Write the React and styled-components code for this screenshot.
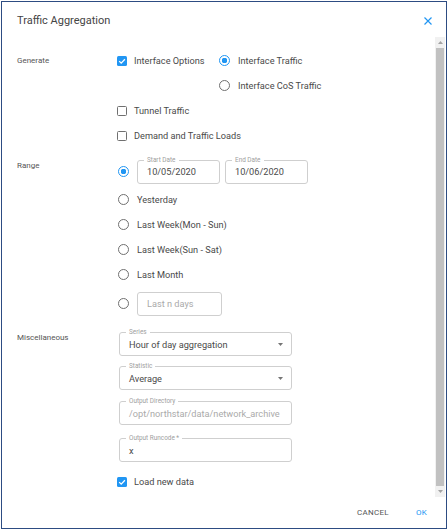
import styled, { createGlobalStyle } from 'styled-components';

const GlobalStyle = createGlobalStyle`
  html, body {
    margin: 0;
    padding: 0;
    background: #ffffff;
  }
  body {
    font-family: Roboto, "Liberation Sans", Arial, sans-serif;
    color: #4a4a4a;
  }
`;

const BLUE = '#2196f3';

function CheckIcon() {
  return (
    <svg width="10" height="10" viewBox="0 0 10 10">
      <path d="M2.2 5.1 L4.2 7.1 L7.9 3.2" fill="none" stroke="#fff" strokeWidth="1.3" />
    </svg>
  );
}

function CloseIcon() {
  return (
    <svg width="10" height="10" viewBox="0 0 10 10">
      <path d="M1.5 1.5 L8.5 8.5 M8.5 1.5 L1.5 8.5" stroke={BLUE} strokeWidth="1.2" />
    </svg>
  );
}

function Caret({ up, color = '#757575' }) {
  return (
    <svg width="5" height="3" viewBox="0 0 5 3">
      <path d={up ? 'M0 3 L5 3 L2.5 0 Z' : 'M0 0 L5 0 L2.5 3 Z'} fill={color} />
    </svg>
  );
}

function Checkbox({ checked, label }) {
  return (
    <Option>
      <Box $checked={checked}>{checked && <CheckIcon />}</Box>
      <OptionText>{label}</OptionText>
    </Option>
  );
}

function Radio({ checked, label, children }) {
  return (
    <Option $gap={8}>
      <Ring $checked={checked} />
      {label && <OptionText>{label}</OptionText>}
      {children}
    </Option>
  );
}

function Field({ label, value, placeholder, width, select, disabled }) {
  return (
    <FieldBox $width={width}>
      {label && <FieldLabel>{label}</FieldLabel>}
      <FieldValue $muted={disabled || !value}>{value || placeholder}</FieldValue>
      {select && <Caret />}
    </FieldBox>
  );
}

export default function App() {
  return (
    <Page>
      <GlobalStyle />
      <Dialog>
        <Header>
          <Title>Traffic Aggregation</Title>
          <CloseButton>
            <CloseIcon />
          </CloseButton>
        </Header>

        <Main>
          <Body>
            <Section>
              <SectionLabel $top={7}>Generate</SectionLabel>
              <Controls>
                <Row>
                  <FirstOption>
                    <Checkbox checked label="Interface Options" />
                  </FirstOption>
                  <Controls>
                    <Radio checked label="Interface Traffic" />
                    <Radio label="Interface CoS Traffic" />
                  </Controls>
                </Row>
                <Checkbox label="Tunnel Traffic" />
                <Checkbox label="Demand and Traffic Loads" />
              </Controls>
            </Section>

            <Section $mt={11}>
              <SectionLabel $top={1}>Range</SectionLabel>
              <RangeList>
                <Radio checked>
                  <Row $gap={5}>
                    <Field label="Start Date" value="10/05/2020" width={83} />
                    <Field label="End Date" value="10/06/2020" width={83} />
                  </Row>
                </Radio>
                <Spacer $h={3} />
                <Radio label="Yesterday" />
                <Radio label="Last Week(Mon - Sun)" />
                <Radio label="Last Week(Sun - Sat)" />
                <Radio label="Last Month" />
                <Spacer $h={4} />
                <Radio>
                  <Field placeholder="Last n days" width={85} />
                </Radio>
              </RangeList>
            </Section>

            <Section $mt={16}>
              <SectionLabel $top={0}>Miscellaneous</SectionLabel>
              <FieldStack>
                <Field label="Series" value="Hour of day aggregation" width={173} select />
                <Spacer $h={10} />
                <Field label="Statistic" value="Average" width={173} select />
                <Spacer $h={11} />
                <Field label="Output Directory" value="/opt/northstar/data/network_archive" width={173} disabled />
                <Spacer $h={13} />
                <Field label="Output Runcode *" value="x" width={173} />
                <Spacer $h={7} />
                <LoadRow>
                  <Checkbox checked label="Load new data" />
                </LoadRow>
              </FieldStack>
            </Section>
          </Body>

          <ScrollBar>
            <ScrollArrow>
              <Caret up color="#a3a3a3" />
            </ScrollArrow>
            <Thumb />
            <ScrollArrow>
              <Caret color="#a3a3a3" />
            </ScrollArrow>
          </ScrollBar>
        </Main>

        <Footer>
          <TextButton>CANCEL</TextButton>
          <TextButton $primary>OK</TextButton>
        </Footer>
      </Dialog>
    </Page>
  );
}

const Page = styled.div`
  width: 448px;
  height: 530px;
  padding: 1px;
  box-sizing: border-box;
`;

const Dialog = styled.div`
  width: 100%;
  height: 100%;
  box-sizing: border-box;
  border: 1px solid #2d4c82;
  background: #ffffff;
  display: flex;
  flex-direction: column;
`;

const Header = styled.div`
  height: 35px;
  flex-shrink: 0;
  display: flex;
  align-items: center;
  justify-content: space-between;
  padding: 2px 13px 0 15px;
  box-sizing: border-box;
`;

const Title = styled.div`
  font-size: 11px;
  color: #444444;
`;

const CloseButton = styled.div`
  display: flex;
  align-items: center;
  cursor: pointer;
`;

const Main = styled.div`
  height: 460px;
  flex-shrink: 0;
  display: flex;
`;

const Body = styled.div`
  flex: 1;
  display: flex;
  flex-direction: column;
  padding: 11px 0 0 15px;
  overflow: hidden;
`;

const Section = styled.div`
  display: grid;
  grid-template-columns: 100px 1fr;
  align-items: start;
  margin-top: ${(props) => props.$mt || 0}px;
`;

const SectionLabel = styled.div`
  font-size: 8px;
  line-height: 12px;
  color: #555555;
  padding-top: ${(props) => props.$top}px;
`;

const Controls = styled.div`
  display: flex;
  flex-direction: column;
`;

const Row = styled.div`
  display: flex;
  align-items: flex-start;
  gap: ${(props) => props.$gap || 0}px;
`;

const FirstOption = styled.div`
  width: 102px;
  flex-shrink: 0;
`;

const RangeList = styled.div`
  display: flex;
  flex-direction: column;
  padding-left: 1px;
`;

const FieldStack = styled.div`
  display: flex;
  flex-direction: column;
  padding-left: 2px;
`;

const LoadRow = styled.div`
  margin-left: -2px;
`;

const Spacer = styled.div`
  height: ${(props) => props.$h}px;
`;

const Option = styled.div`
  display: flex;
  align-items: center;
  min-height: 25px;
  gap: ${(props) => props.$gap || 7}px;
`;

const OptionText = styled.span`
  font-size: 9.2px;
  color: #4a4a4a;
  white-space: nowrap;
`;

const Box = styled.div`
  width: 10px;
  height: 10px;
  box-sizing: border-box;
  border-radius: 1.5px;
  display: flex;
  align-items: center;
  justify-content: center;
  background: ${(props) => (props.$checked ? BLUE : '#ffffff')};
  border: ${(props) => (props.$checked ? 'none' : '1.2px solid #707070')};
`;

const Ring = styled.div`
  width: 11px;
  height: 11px;
  flex-shrink: 0;
  box-sizing: border-box;
  border-radius: 50%;
  border: 1.2px solid ${(props) => (props.$checked ? BLUE : '#707070')};
  background: ${(props) =>
    props.$checked ? `radial-gradient(circle, ${BLUE} 0 2.6px, #ffffff 3px)` : '#ffffff'};
`;

const FieldBox = styled.div`
  position: relative;
  width: ${(props) => props.$width}px;
  height: 24px;
  box-sizing: border-box;
  border: 1px solid #cfcfcf;
  border-radius: 3px;
  display: flex;
  align-items: center;
  justify-content: space-between;
  padding: 0 8px 0 9px;
`;

const FieldLabel = styled.span`
  position: absolute;
  top: -5px;
  left: 6px;
  padding: 0 3px;
  background: #ffffff;
  font-size: 6.4px;
  line-height: 8px;
  color: #a0a0a0;
  white-space: nowrap;
`;

const FieldValue = styled.span`
  font-size: 9.2px;
  color: ${(props) => (props.$muted ? '#aaaaaa' : '#4a4a4a')};
  white-space: nowrap;
`;

const ScrollBar = styled.div`
  width: 10px;
  margin-right: 1px;
  background: #f1f1f1;
  display: flex;
  flex-direction: column;
`;

const ScrollArrow = styled.div`
  height: 11px;
  display: flex;
  align-items: center;
  justify-content: center;
`;

const Thumb = styled.div`
  flex: 1;
  margin: 0 1px;
  background: #c1c1c1;
`;

const Footer = styled.div`
  flex: 1;
  display: flex;
  align-items: center;
  justify-content: flex-end;
  gap: 27px;
  padding-right: 19px;
`;

const TextButton = styled.span`
  font-size: 8px;
  letter-spacing: 0.3px;
  color: ${(props) => (props.$primary ? BLUE : '#555555')};
  cursor: pointer;
`;
